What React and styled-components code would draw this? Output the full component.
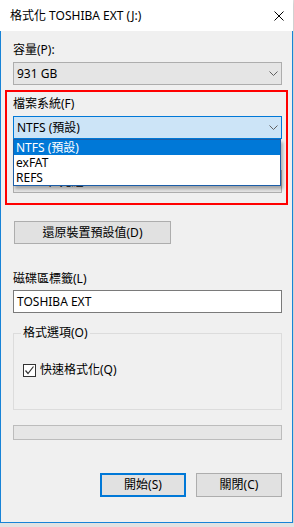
import React from "react";
import styled, { createGlobalStyle } from "styled-components";

const GlobalStyle = createGlobalStyle`
  html, body { margin: 0; padding: 0; background: #e2e2e2; }
  body {
    font-family: "Noto Sans", "Noto Sans CJK TC", sans-serif;
    font-size: 12px;
    color: #000;
  }
  * { box-sizing: border-box; }
`;

const Window = styled.div`
  width: 293px;
  box-shadow: 0 2px 5px rgba(0, 0, 0, 0.18);
`;

const TitleBar = styled.div`
  height: 31px;
  background: #fff;
  display: flex;
  align-items: center;
  justify-content: space-between;
  padding: 0 9px 0 10px;
`;

const Title = styled.span`
  line-height: 16px;
  white-space: nowrap;
`;

const Body = styled.div`
  position: relative;
  height: 492px;
  background: #f0f0f0;
  border: 1px solid #1883d7;
  border-top: none;
  padding: 11px 10px 0 12px;
  display: flex;
  flex-direction: column;
`;

const FieldLabel = styled.div`
  line-height: 16px;
  margin-top: ${(p) => p.$top || 0}px;
  margin-bottom: ${(p) => (p.$gap != null ? p.$gap : 4)}px;
  white-space: nowrap;
`;

const SelectWrap = styled.div`
  position: relative;
`;

const Select = styled.div`
  height: 23px;
  display: flex;
  align-items: center;
  justify-content: space-between;
  padding: 0 3px 0 3px;
  border: 1px solid ${(p) => (p.$focused ? "#0078d7" : "#adadad")};
  background: ${(p) => (p.$focused ? "#cce4f7" : "#e5e5e5")};
  line-height: 16px;
  white-space: nowrap;
`;

const DropList = styled.ul`
  position: absolute;
  z-index: 2;
  top: 100%;
  left: 0;
  width: 268px;
  margin: 0;
  padding: 0;
  list-style: none;
  background: #fff;
  border: 1px solid #1c5ea8;
  box-shadow: 2px 3px 3px rgba(0, 0, 0, 0.28);
`;

const DropItem = styled.li`
  height: 15px;
  line-height: 15px;
  padding-left: 2px;
  background: ${(p) => (p.$active ? "#0078d7" : "transparent")};
  color: ${(p) => (p.$active ? "#fff" : "#000")};
  white-space: nowrap;
`;

const Button = styled.button`
  font: inherit;
  color: #000;
  height: ${(p) => p.$h || 23}px;
  width: ${(p) => p.$w}px;
  padding: 0;
  background: #e1e1e1;
  border: ${(p) => (p.$default ? "2px solid #0078d7" : "1px solid #adadad")};
  line-height: 16px;
  white-space: nowrap;
`;

const ResetButton = styled(Button)`
  margin-top: 28px;
  margin-left: 1px;
`;

const TextInput = styled.div`
  height: 23px;
  display: flex;
  align-items: center;
  padding-left: 3px;
  background: #fff;
  border: 1px solid #7a7a7a;
  line-height: 16px;
`;

const GroupBox = styled.div`
  margin-top: 20px;
  border: 1px solid #dcdcdc;
  padding: 0 8px 31px 7px;
`;

const GroupLegend = styled.div`
  display: inline-block;
  margin-top: -9px;
  padding: 0 2px;
  background: #f0f0f0;
  line-height: 16px;
  vertical-align: top;
`;

const CheckRow = styled.div`
  display: flex;
  align-items: center;
  margin-top: 11px;
  margin-left: 2px;
  height: 16px;
  gap: 4px;
  line-height: 16px;
`;

const CheckBox = styled.span`
  width: 13px;
  height: 13px;
  border: 1px solid #333;
  background: #fff;
  display: flex;
  align-items: center;
  justify-content: center;
`;

const Progress = styled.div`
  margin-top: 15px;
  height: 15px;
  background: #e6e6e6;
  border: 1px solid #bcbcbc;
`;

const ButtonRow = styled.div`
  margin-top: 33px;
  display: flex;
  justify-content: flex-end;
  gap: 10px;
`;

const Annotation = styled.div`
  position: absolute;
  top: 59px;
  left: 4px;
  width: 283px;
  height: 115px;
  border: 2px solid #ff0000;
  pointer-events: none;
  z-index: 3;
`;

const Chevron = () => (
  <svg width="9" height="5" viewBox="0 0 9 5">
    <path d="M0.5 0.5 L4.5 4.5 L8.5 0.5" fill="none" stroke="#606060" strokeWidth="1" />
  </svg>
);

const CloseIcon = () => (
  <svg width="10" height="10" viewBox="0 0 10 10">
    <path d="M0.5 0.5 L9.5 9.5 M9.5 0.5 L0.5 9.5" fill="none" stroke="#000" strokeWidth="1" />
  </svg>
);

const CheckMark = () => (
  <svg width="11" height="11" viewBox="0 0 11 11">
    <path d="M1.5 5.5 L4 8.5 L9.5 1.5" fill="none" stroke="#333" strokeWidth="1.2" />
  </svg>
);

export default function App() {
  return (
    <>
      <GlobalStyle />
      <Window>
        <TitleBar>
          <Title>格式化 TOSHIBA EXT (J:)</Title>
          <CloseIcon />
        </TitleBar>
        <Body>
          <FieldLabel>容量(P):</FieldLabel>
          <Select>
            <span>931 GB</span>
            <Chevron />
          </Select>

          <FieldLabel $top={11}>檔案系統(F)</FieldLabel>
          <SelectWrap>
            <Select $focused>
              <span>NTFS (預設)</span>
              <Chevron />
            </Select>
            <DropList>
              <DropItem $active>NTFS (預設)</DropItem>
              <DropItem>exFAT</DropItem>
              <DropItem>REFS</DropItem>
            </DropList>
          </SelectWrap>

          <FieldLabel $top={11}>配置單位大小(A)</FieldLabel>
          <Select>
            <span>4096 位元組</span>
            <Chevron />
          </Select>

          <ResetButton $w={157}>還原裝置預設值(D)</ResetButton>

          <FieldLabel $top={27} $gap={3}>磁碟區標籤(L)</FieldLabel>
          <TextInput>TOSHIBA EXT</TextInput>

          <GroupBox>
            <GroupLegend>格式選項(O)</GroupLegend>
            <CheckRow>
              <CheckBox>
                <CheckMark />
              </CheckBox>
              <span>快速格式化(Q)</span>
            </CheckRow>
          </GroupBox>

          <Progress />

          <ButtonRow>
            <Button $default $w={86} $h={24}>開始(S)</Button>
            <Button $w={86} $h={24}>關閉(C)</Button>
          </ButtonRow>

          <Annotation />
        </Body>
      </Window>
    </>
  );
}
